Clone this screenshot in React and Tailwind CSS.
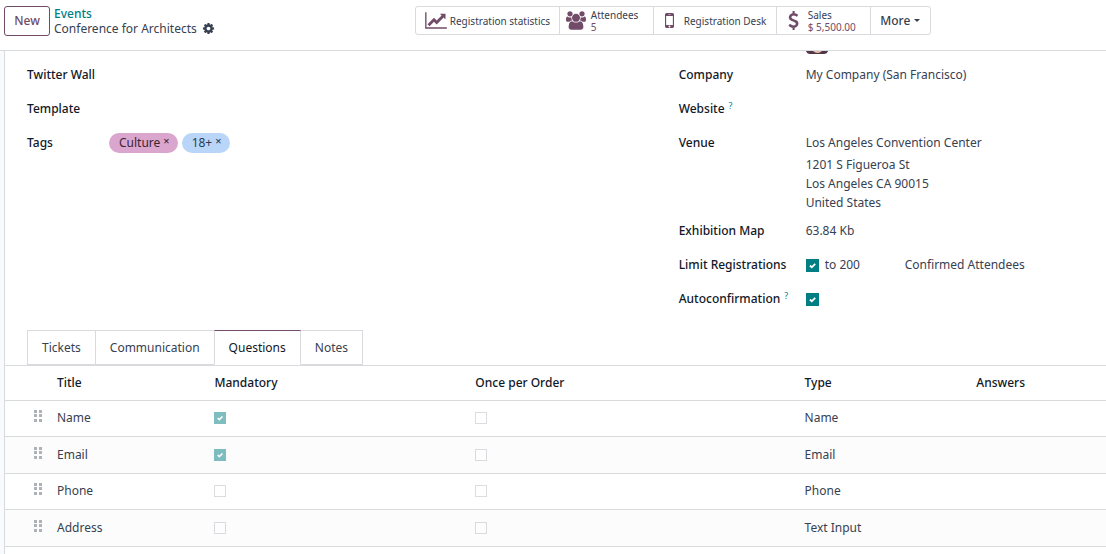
import { useState } from "react";

const QUESTIONS = [
  { id: 1, title: "Name", mandatory: true, once: false, type: "Name" },
  { id: 2, title: "Email", mandatory: true, once: false, type: "Email" },
  { id: 3, title: "Phone", mandatory: false, once: false, type: "Phone" },
  { id: 4, title: "Address", mandatory: false, once: false, type: "Text Input" },
];

const TABS = ["Tickets", "Communication", "Questions", "Notes"];

function Icon({ viewBox = "0 0 1792 1792", className, d }) {
  return (
    <svg viewBox={viewBox} className={className} fill="currentColor" aria-hidden="true">
      <path d={d} />
    </svg>
  );
}

function CogIcon() {
  return (
    <Icon
      className="size-[13px]"
      d="M1152 896q0-106-75-181t-181-75-181 75-75 181 75 181 181 75 181-75 75-181zm512-109v222q0 12-8 23t-20 13l-185 28q-19 54-39 91 35 50 107 138 10 12 10 25t-9 23q-27 37-99 108t-94 71q-12 0-26-9l-138-108q-44 23-91 38-16 136-29 186-7 28-36 28h-222q-14 0-24.5-8.5t-11.5-21.5l-28-184q-49-16-90-37l-141 107q-10 9-25 9-14 0-25-11-126-114-165-168-7-10-7-23 0-12 8-23 15-21 51-66.5t54-70.5q-27-50-41-99l-183-27q-13-2-21-12.5t-8-23.5v-222q0-12 8-23t19-13l186-28q14-46 39-92-40-57-107-138-10-12-10-24 0-10 9-23 26-36 98.5-107.5t94.5-71.5q13 0 26 10l138 107q44-23 91-38 16-136 29-186 7-28 36-28h222q14 0 24.5 8.5t11.5 21.5l28 184q49 16 90 37l142-107q9-9 24-9 13 0 25 10 129 119 165 170 7 8 7 22 0 12-8 23-15 21-51 66.5t-54 70.5q26 50 41 98l183 28q13 2 21 12.5t8 23.5z"
    />
  );
}

function ChartIcon() {
  return (
    <Icon
      viewBox="0 0 2048 1792"
      className="h-[19px] w-[22px]"
      d="M2048 1536v128h-2048v-1536h128v1408h1920zm-128-1248v435q0 21-19.5 29.5t-35.5-7.5l-121-121-633 633q-10 10-23 10t-23-10l-233-233-416 416-192-192 585-585q10-10 23-10t23 10l233 233 464-464-121-121q-16-16-7.5-35.5t29.5-19.5h435q14 0 23 9t9 23z"
    />
  );
}

function UsersIcon() {
  return (
    <Icon
      viewBox="0 0 1920 1792"
      className="h-[19px] w-[20px]"
      d="M593 896q-162 5-265 128h-134q-82 0-138-40.5t-56-118.5q0-353 124-353 6 0 43.5 21t97.5 42.5 119 21.5q67 0 133-23-5 37-5 66 0 139 81 256zm1071 637q0 120-73 189.5t-194 69.5h-874q-121 0-194-69.5t-73-189.5q0-53 3.5-103.5t14-109 26.5-108.5 43-97.5 62-81 85.5-53.5 111.5-20q10 0 43 21.5t73 48 107 48 135 21.5 135-21.5 107-48 73-48 43-21.5q61 0 111.5 20t85.5 53.5 62 81 43 97.5 26.5 108.5 14 109 3.5 103.5zm-1024-1277q0 106-75 181t-181 75-181-75-75-181 75-181 181-75 181 75 75 181zm704 384q0 159-112.5 271.5t-271.5 112.5-271.5-112.5-112.5-271.5 112.5-271.5 271.5-112.5 271.5 112.5 112.5 271.5zm576 225q0 78-56 118.5t-138 40.5h-134q-103-123-265-128 81-117 81-256 0-29-5-66 66 23 133 23 59 0 119-21.5t97.5-42.5 43.5-21q124 0 124 353zm-128-609q0 106-75 181t-181 75-181-75-75-181 75-181 181-75 181 75 75 181z"
    />
  );
}

function MobileIcon() {
  return (
    <Icon
      viewBox="512 256 768 1280"
      className="h-[15px] w-[9px]"
      d="M976 1408q0-33-23.5-56.5t-56.5-23.5-56.5 23.5-23.5 56.5 23.5 56.5 56.5 23.5 56.5-23.5 23.5-56.5zm208-160v-704q0-13-9.5-22.5t-22.5-9.5h-512q-13 0-22.5 9.5t-9.5 22.5v704q0 13 9.5 22.5t22.5 9.5h512q13 0 22.5-9.5t9.5-22.5zm-192-848q0-16-16-16h-160q-16 0-16 16t16 16h160q16 0 16-16zm288-16v1024q0 52-38 90t-90 38h-512q-52 0-90-38t-38-90v-1024q0-52 38-90t90-38h512q52 0 90 38t38 90z"
    />
  );
}

function DollarIcon() {
  return (
    <Icon
      viewBox="384 0 1024 1792"
      className="h-[19px] w-[11px]"
      d="M1362 1185q0 153-99.5 263.5t-258.5 136.5v175q0 14-9 23t-23 9h-135q-13 0-22.5-9.5t-9.5-22.5v-175q-66-9-127.5-31t-101.5-44.5-74-48-46.5-37.5-17.5-18q-17-21-2-41l103-135q7-10 23-12 15-2 24 9l2 2q113 99 243 125 37 8 74 8 81 0 142.5-43t61.5-122q0-28-15-53t-33.5-42-58.5-37.5-66-32-80-32.5q-39-16-61.5-25t-61.5-26.5-62.5-31-56.5-35.5-53.5-42.5-43.5-49-35.5-58-21-66.5-8.5-78q0-138 98-242t255-134v-180q0-13 9.5-22.5t22.5-9.5h135q14 0 23 9t9 23v176q57 6 110.5 23t87 33.5 63.5 37.5 39 29 15 14q17 18 5 38l-81 146q-8 15-23 16-14 3-27-7-3-3-14.5-12t-39-26.5-58.5-32-74.5-26-85.5-11.5q-95 0-155 43t-60 111q0 26 8.5 48t29.5 41.5 39.5 33 56 31 60.5 27 70 27.5q53 20 81 31.5t76 35 75.5 42.5 62 50 53 63.5 31.5 76.5 13 94z"
    />
  );
}

function HandleIcon() {
  return (
    <svg viewBox="0 0 8 12" className="h-[12px] w-[8px]" fill="#adb1b8" aria-hidden="true">
      {[0, 4, 9].map((y) => (
        <g key={y}>
          <rect x="0" y={y} width="3" height="3" />
          <rect x="5" y={y} width="3" height="3" />
        </g>
      ))}
    </svg>
  );
}

function Checkbox({ id, label, defaultChecked, disabled }) {
  return (
    <span className={`inline-grid shrink-0 ${disabled ? "size-[12px] opacity-50" : "size-[13px]"}`}>
      <input
        id={id}
        type="checkbox"
        aria-label={label}
        defaultChecked={defaultChecked}
        disabled={disabled}
        className="peer col-start-1 row-start-1 size-full appearance-none border border-[#b9bcc2] bg-white checked:border-[#017e84] checked:bg-[#017e84]"
      />
      <svg
        viewBox="0 0 13 13"
        className="pointer-events-none invisible col-start-1 row-start-1 size-full peer-checked:visible"
        fill="none"
        stroke="#fff"
        strokeWidth="1.8"
        aria-hidden="true"
      >
        <path d="M4 6.500l1.800 1.800 3.400-3.400" />
      </svg>
    </span>
  );
}

function Help() {
  return <sup className="ml-1 text-[9px] font-normal text-[#017e84]">?</sup>;
}

function Field({ label, htmlFor, help, children }) {
  const Label = htmlFor ? "label" : "span";

  return (
    <div className="flex h-[34px] items-start">
      <Label htmlFor={htmlFor} className="w-[127px] shrink-0 leading-[33px] font-medium whitespace-nowrap text-[#111827]">
        {label}
        {help ? <Help /> : null}
      </Label>
      <div className="leading-[34px]">{children}</div>
    </div>
  );
}

function Tag({ name, className }) {
  return (
    <span className={`flex h-[20px] items-center gap-[3px] rounded-full pr-[8px] pl-[10px] ${className}`}>
      {name}
      <button type="button" aria-label={`Remove ${name}`} className="pb-1 text-[11px] leading-none font-medium">
        ×
      </button>
    </span>
  );
}

function StatButton({ icon, label, value, className }) {
  return (
    <button type="button" className={`flex items-center border-r border-[#d8dadd] text-left text-[10px] leading-[12px] ${className}`}>
      <span className="text-[#714b67]">{icon}</span>
      <span className="whitespace-nowrap">
        {label}
        {value ? <span className="block text-[#714b67]">{value}</span> : null}
      </span>
    </button>
  );
}

function ControlPanel() {
  return (
    <header className="grid h-[51px] grid-cols-[3fr_5fr] border-b border-[#d8dadd] bg-white pt-[6px]">
      <div className="flex items-start gap-1 pl-1">
        <button type="button" className="h-[30px] w-[46px] rounded-[3px] border border-[#714b67] font-medium text-[#714b67]">
          New
        </button>
        <div className="leading-[15px]">
          <a href="#events" className="block font-medium text-[#017e84]">
            Events
          </a>
          <div className="flex items-center gap-[5px]">
            <span>Conference for Architects</span>
            <button type="button" aria-label="Actions">
              <CogIcon />
            </button>
          </div>
        </div>
      </div>
      <div className="flex h-[29px] w-fit rounded-[3px] border border-[#d8dadd]">
        <StatButton icon={<ChartIcon />} label="Registration statistics" className="w-[144px] gap-[3px] pl-[9px]" />
        <StatButton icon={<UsersIcon />} label="Attendees" value="5" className="w-[94px] gap-[5px] pl-[6px]" />
        <StatButton icon={<MobileIcon />} label="Registration Desk" className="w-[123px] gap-[10px] pl-[11px]" />
        <StatButton icon={<DollarIcon />} label="Sales" value="$ 5,500.00" className="w-[94px] gap-[9px] pl-[11px]" />
        <button type="button" className="flex w-[59px] items-center justify-center gap-1 font-medium">
          More
          <span className="border-x-[3px] border-t-[3px] border-x-transparent border-t-current" />
        </button>
      </div>
    </header>
  );
}

function EventFields() {
  return (
    <div className="grid grid-cols-[61fr_40fr] pl-[22px]">
      <div className="pt-[7px]">
        <Field label="Twitter Wall" />
        <Field label="Template" />
        <div className="flex h-[33px] items-center">
          <span className="w-[82px] font-medium text-[#111827]">Tags</span>
          <div className="flex gap-1">
            <Tag name="Culture" className="bg-[#dba6cd] text-[#3b2436]" />
            <Tag name="18+" className="bg-[#b9d6f8] text-[#2b3b52]" />
          </div>
        </div>
      </div>
      <div>
        <div className="h-[7px] pl-[127px]">
          <svg viewBox="0 0 22 3" className="h-[3px] w-[22px]" aria-hidden="true">
            <path d="M0 0h22q-1 3-4 3H4Q1 3 0 0z" fill="#52364a" />
            <path d="M7 0h9q-2 2-4.500 2T7 0z" fill="#e5bfa9" />
          </svg>
        </div>
        <Field label="Company">My Company (San Francisco)</Field>
        <Field label="Website" help />
        <div className="h-[88px]">
          <Field label="Venue">
            <address className="pt-[5px] leading-[19px] not-italic">
              <span className="block leading-[24px]">Los Angeles Convention Center</span>
              1201 S Figueroa St
              <br />
              Los Angeles CA 90015
              <br />
              United States
            </address>
          </Field>
        </div>
        <Field label="Exhibition Map">63.84 Kb</Field>
        <Field label="Limit Registrations" htmlFor="limit">
          <div className="flex items-center">
            <Checkbox id="limit" defaultChecked />
            <span className="ml-[6px] w-[80px]">to 200</span>
            <span>Confirmed Attendees</span>
          </div>
        </Field>
        <Field label="Autoconfirmation" htmlFor="autoconfirm" help>
          <div className="flex h-[34px] items-center">
            <Checkbox id="autoconfirm" defaultChecked />
          </div>
        </Field>
      </div>
    </div>
  );
}

function QuestionsTable() {
  return (
    <table className="w-full table-fixed border-collapse text-left">
      <thead>
        <tr className="h-[34px] border-b border-[#d8dadd] text-[#111827] *:p-0 *:font-medium">
          <th className="w-[52px]" aria-label="Reorder" />
          <th className="w-[14.3%]">Title</th>
          <th className="w-[23.7%]">Mandatory</th>
          <th className="w-[29.9%]">Once per Order</th>
          <th className="w-[15.6%]">Type</th>
          <th>Answers</th>
        </tr>
      </thead>
      <tbody>
        {QUESTIONS.map((question) => (
          <tr key={question.id} className="h-[36px] border-b border-[#d8dadd] *:p-0 even:h-[37px] even:bg-[#fcfcfc]">
            <td>
              <div className="pb-1 pl-[29px]">
                <HandleIcon />
              </div>
            </td>
            <td>{question.title}</td>
            <td>
              <div className="flex">
                <Checkbox label={`${question.title} mandatory`} defaultChecked={question.mandatory} disabled />
              </div>
            </td>
            <td>
              <div className="flex">
                <Checkbox label={`${question.title} once per order`} defaultChecked={question.once} disabled />
              </div>
            </td>
            <td>{question.type}</td>
            <td />
          </tr>
        ))}
      </tbody>
    </table>
  );
}

function App() {
  const [activeTab, setActiveTab] = useState("Questions");

  return (
    <div className="flex h-screen flex-col overflow-hidden bg-[#f9fafb] font-['Noto_Sans',sans-serif] text-[12px] text-[#374151]">
      <ControlPanel />
      <main className="ml-1 flex-1 overflow-hidden border-l border-[#d8dadd] bg-white">
        <EventFields />
        <div role="tablist" className="mt-[14px] flex border-b border-[#d8dadd] pl-[22px]">
          {TABS.map((tab) => (
            <button
              key={tab}
              type="button"
              role="tab"
              aria-selected={tab === activeTab}
              onClick={() => setActiveTab(tab)}
              className="-mr-px h-[35px] border border-[#d8dadd] px-[14px] aria-selected:z-10 aria-selected:border-t-[#714b67] aria-selected:border-b-white aria-selected:text-[#111827]"
            >
              {tab}
            </button>
          ))}
        </div>
        <QuestionsTable />
      </main>
    </div>
  );
}

export default App;
